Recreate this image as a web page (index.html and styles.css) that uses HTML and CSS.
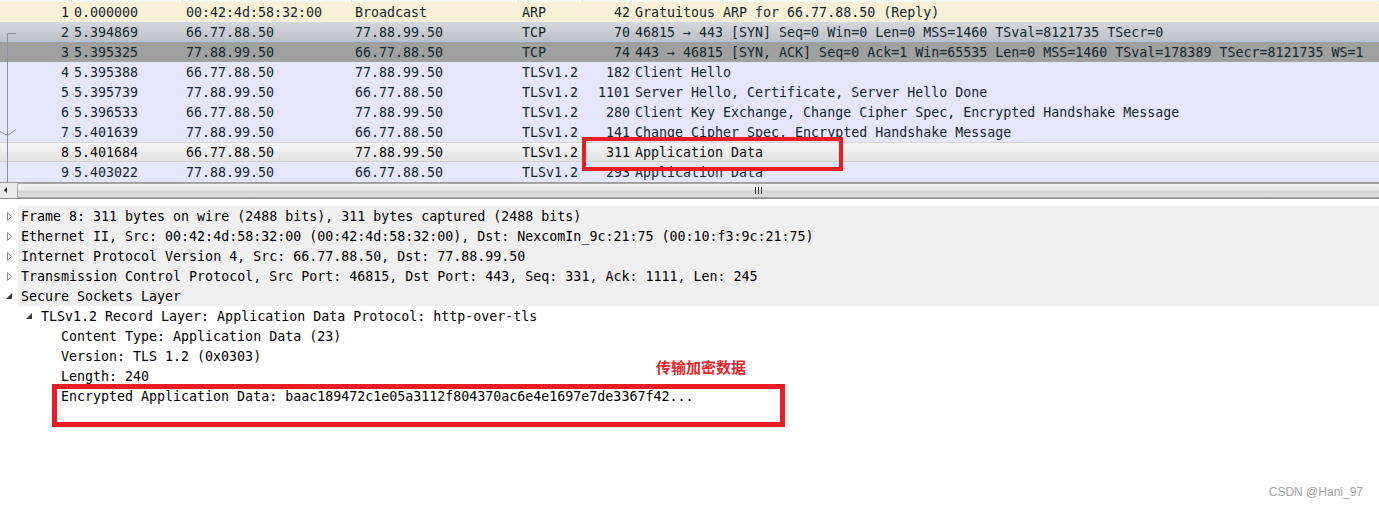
FILE: index.html
```html
<!DOCTYPE html>
<html lang="zh-CN">
<head>
<meta charset="utf-8">
<title>Wireshark TLS</title>
<link rel="stylesheet" href="styles.css">
</head>
<body>
<div class="list">
  <div class="hdr"><span></span><span></span><span></span><span></span><span></span><span></span><span></span></div>
  <div class="row arp"><span class="no">1</span><span class="t">0.000000</span><span class="s">00:42:4d:58:32:00</span><span class="d">Broadcast</span><span class="p">ARP</span><span class="l">42</span><span class="i">Gratuitous ARP for 66.77.88.50 (Reply)</span></div>
  <div class="row hover"><span class="no">2</span><span class="t">5.394869</span><span class="s">66.77.88.50</span><span class="d">77.88.99.50</span><span class="p">TCP</span><span class="l">70</span><span class="i">46815 → 443 [SYN] Seq=0 Win=0 Len=0 MSS=1460 TSval=8121735 TSecr=0</span></div>
  <div class="row syn"><span class="no">3</span><span class="t">5.395325</span><span class="s">77.88.99.50</span><span class="d">66.77.88.50</span><span class="p">TCP</span><span class="l">74</span><span class="i">443 → 46815 [SYN, ACK] Seq=0 Ack=1 Win=65535 Len=0 MSS=1460 TSval=178389 TSecr=8121735 WS=1</span></div>
  <div class="row tls"><span class="no">4</span><span class="t">5.395388</span><span class="s">66.77.88.50</span><span class="d">77.88.99.50</span><span class="p">TLSv1.2</span><span class="l">182</span><span class="i">Client Hello</span></div>
  <div class="row tls"><span class="no">5</span><span class="t">5.395739</span><span class="s">77.88.99.50</span><span class="d">66.77.88.50</span><span class="p">TLSv1.2</span><span class="l">1101</span><span class="i">Server Hello, Certificate, Server Hello Done</span></div>
  <div class="row tls"><span class="no">6</span><span class="t">5.396533</span><span class="s">66.77.88.50</span><span class="d">77.88.99.50</span><span class="p">TLSv1.2</span><span class="l">280</span><span class="i">Client Key Exchange, Change Cipher Spec, Encrypted Handshake Message</span></div>
  <div class="row tls"><span class="no">7</span><span class="t">5.401639</span><span class="s">77.88.99.50</span><span class="d">66.77.88.50</span><span class="p">TLSv1.2</span><span class="l">141</span><span class="i">Change Cipher Spec, Encrypted Handshake Message</span></div>
  <div class="row sel"><span class="no">8</span><span class="t">5.401684</span><span class="s">66.77.88.50</span><span class="d">77.88.99.50</span><span class="p">TLSv1.2</span><span class="l">311</span><span class="i">Application Data</span></div>
  <div class="row tls"><span class="no">9</span><span class="t">5.403022</span><span class="s">77.88.99.50</span><span class="d">66.77.88.50</span><span class="p">TLSv1.2</span><span class="l">293</span><span class="i">Application Data</span></div>
  <svg class="rel" width="20" height="182" viewBox="0 0 20 182">
    <path d="M7.5 33.5 H16 M7.5 33.5 V182" stroke="#8793a2" stroke-width="1" fill="none"/>
    <polyline points="0,131.5 7.5,135.5 16,129.5" stroke="#8793a2" stroke-width="1" fill="none"/>
  </svg>
</div>
<div class="hscroll">
  <div class="arrow"><svg width="16" height="15" viewBox="0 0 16 15"><polygon points="7,4 7,10 4,7" fill="#222"/></svg></div>
  <div class="thumb"><div class="grip"><i></i><i></i><i></i></div></div>
</div>
<div class="details">
  <div class="node top"><span class="tw"><svg width="18" height="20" viewBox="0 0 18 20"><polygon points="7.5,6.5 7.5,14.5 11.5,10.5" fill="none" stroke="#8c8c8c"/></svg></span><span class="lbl">Frame 8: 311 bytes on wire (2488 bits), 311 bytes captured (2488 bits)</span></div>
  <div class="node top"><span class="tw"><svg width="18" height="20" viewBox="0 0 18 20"><polygon points="7.5,6.5 7.5,14.5 11.5,10.5" fill="none" stroke="#8c8c8c"/></svg></span><span class="lbl">Ethernet II, Src: 00:42:4d:58:32:00 (00:42:4d:58:32:00), Dst: NexcomIn_9c:21:75 (00:10:f3:9c:21:75)</span></div>
  <div class="node top"><span class="tw"><svg width="18" height="20" viewBox="0 0 18 20"><polygon points="7.5,6.5 7.5,14.5 11.5,10.5" fill="none" stroke="#8c8c8c"/></svg></span><span class="lbl">Internet Protocol Version 4, Src: 66.77.88.50, Dst: 77.88.99.50</span></div>
  <div class="node top"><span class="tw"><svg width="18" height="20" viewBox="0 0 18 20"><polygon points="7.5,6.5 7.5,14.5 11.5,10.5" fill="none" stroke="#8c8c8c"/></svg></span><span class="lbl">Transmission Control Protocol, Src Port: 46815, Dst Port: 443, Seq: 331, Ack: 1111, Len: 245</span></div>
  <div class="node top"><span class="tw"><svg width="18" height="20" viewBox="0 0 18 20"><polygon points="12,7 12,13 6,13" fill="#3a3a3a"/></svg></span><span class="lbl">Secure Sockets Layer</span></div>
  <div class="node lv1"><span class="tw"><svg width="18" height="20" viewBox="0 0 18 20"><polygon points="12,7 12,13 6,13" fill="#3a3a3a"/></svg></span><span class="lbl">TLSv1.2 Record Layer: Application Data Protocol: http-over-tls</span></div>
  <div class="node lv2"><span class="lbl">Content Type: Application Data (23)</span></div>
  <div class="node lv2"><span class="lbl">Version: TLS 1.2 (0x0303)</span></div>
  <div class="node lv2"><span class="lbl">Length: 240</span></div>
  <div class="node lv2"><span class="lbl">Encrypted Application Data: baac189472c1e05a3112f804370ac6e4e1697e7de3367f42...</span></div>
</div>
<div class="mark box1"></div>
<div class="mark box2"></div>
<div class="note">传输加密数据</div>
<div class="wm">CSDN @Hani_97</div>
</body>
</html>
```

FILE: styles.css
```css
html, body {
  margin: 0;
  padding: 0;
  background: #ffffff;
}
body {
  width: 1379px;
  height: 506px;
  overflow: hidden;
  position: relative;
  font-family: "DejaVu Sans Mono", "Liberation Mono", monospace;
  font-size: 13.3px;
}
.list {
  position: relative;
}
.hdr, .row {
  display: grid;
  grid-template-columns: 72px 111px 169px 167px 64px 49px 1fr;
}
.hdr {
  height: 2px;
  background: #f7f7f7;
}
.hdr span {
  border-right: 1px solid #dcdcdc;
}
.row {
  height: 20px;
  line-height: 22px;
  color: #12272e;
  white-space: nowrap;
  box-sizing: border-box;
  overflow: hidden;
}
.row span {
  overflow: hidden;
}
.row .no {
  text-align: right;
  padding-right: 3px;
}
.row .t { padding-left: 2px; }
.row .s { padding-left: 3px; }
.row .d { padding-left: 3px; }
.row .p { padding-left: 3px; }
.row .l {
  text-align: right;
  padding-right: 2px;
}
.row .i { padding-left: 3px; }
.arp { background: #faf0d7; }
.hover {
  background: linear-gradient(#d3d6dc, #bdc1c9);
  border-top: 1px solid #c9d8ea;
  border-bottom: 1px solid #a6c4e4;
  line-height: 20px;
}
.syn { background: #a0a0a0; }
.tls { background: #e7e6ff; }
.sel {
  background: linear-gradient(#f6f6f6, #e3e3e3);
  border-top: 1px solid #d6d6d6;
  border-bottom: 1px solid #d0d0d0;
  line-height: 20px;
  color: #0e0e0e;
}
.rel {
  position: absolute;
  left: 0;
  top: 0;
}
.hscroll {
  display: flex;
  height: 17px;
  box-sizing: border-box;
  border-top: 1px solid #9a9a9a;
  border-bottom: 1px solid #8a8a8a;
  background: #e9e9e9;
}
.arrow {
  width: 16px;
  flex: none;
}
.arrow svg { display: block; }
.thumb {
  flex: 1;
  margin-left: 1px;
  border: 1px solid #a8a8a8;
  border-right: none;
  border-radius: 2px 0 0 2px;
  background: linear-gradient(#f4f4f4, #e6e6e6 45%, #d4d4d4 55%, #dedede);
  display: flex;
  justify-content: flex-start;
  align-items: center;
}
.grip {
  margin-left: 737px;
  display: flex;
  gap: 2px;
}
.grip i {
  display: block;
  width: 1px;
  height: 7px;
  background: #3a3a3a;
}
.details {
  padding-top: 7px;
  color: #000;
}
.node {
  display: flex;
  height: 20px;
  line-height: 22px;
  white-space: nowrap;
  overflow: hidden;
}
.tw {
  width: 18px;
  flex: none;
}
.tw svg { display: block; }
.node .lbl {
  flex: 1;
  padding-left: 3px;
}
.top .lbl { background: #f0f0f0; }
.lv1 { padding-left: 20px; }
.lv2 { padding-left: 40px; }
.lv2 .lbl { padding-left: 21px; }
.mark {
  position: absolute;
  border-style: solid;
  border-color: #ed1c24;
  box-sizing: border-box;
}
.box1 {
  left: 582px;
  top: 137px;
  width: 261px;
  height: 34px;
  border-width: 4px;
}
.box2 {
  left: 52px;
  top: 384px;
  width: 733px;
  height: 43px;
  border-width: 5px;
}
.note {
  position: absolute;
  left: 656px;
  top: 358px;
  font-family: "Noto Sans CJK SC", sans-serif;
  font-weight: bold;
  font-size: 15px;
  line-height: 18px;
  color: #e5262d;
}
.wm {
  position: absolute;
  right: 16px;
  top: 484px;
  font-family: "Liberation Sans", Arial, sans-serif;
  font-size: 12px;
  line-height: 16px;
  color: #a3a3a3;
}
```
